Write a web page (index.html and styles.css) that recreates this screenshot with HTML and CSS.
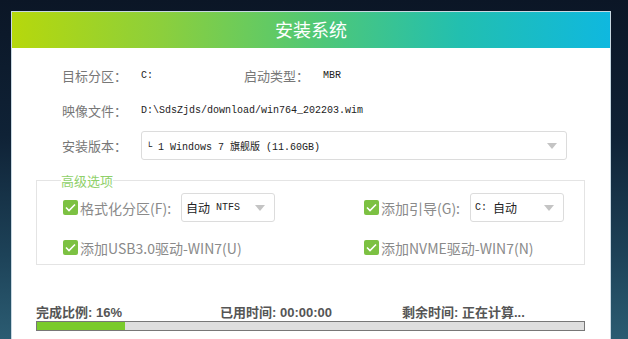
FILE: index.html
```html
<!doctype html>
<html>
<head>
<meta charset="utf-8">
<title>安装系统</title>
<link rel="stylesheet" href="styles.css">
</head>
<body>
<div class="dialog">
  <div class="title">安装系统</div>
  <div class="info">
    <div class="row">
      <span class="label">目标分区：</span>
      <span class="value short">C:</span>
      <span class="label">启动类型：</span>
      <span class="value">MBR</span>
    </div>
    <div class="row">
      <span class="label">映像文件：</span>
      <span class="value">D:\SdsZjds/download/win764_202203.wim</span>
    </div>
    <div class="row">
      <span class="label">安装版本：</span>
      <div class="select wide">
        <span class="value">└ 1 Windows 7 旗舰版 (11.60GB)</span>
        <i class="arrow"></i>
      </div>
    </div>
  </div>
  <fieldset class="adv">
    <legend>高级选项</legend>
    <div class="opts">
      <div class="opt">
        <b class="check"><svg width="11" height="9" viewBox="0 0 11 9"><path d="M1 4.5 L4 7.5 L10 1.5" fill="none" stroke="#fff" stroke-width="1.6"/></svg></b>
        <span>格式化分区(F):</span>
        <div class="select small">
          <span class="cn">自动</span><span class="value">&nbsp;NTFS</span>
          <i class="arrow"></i>
        </div>
      </div>
      <div class="opt">
        <b class="check"><svg width="11" height="9" viewBox="0 0 11 9"><path d="M1 4.5 L4 7.5 L10 1.5" fill="none" stroke="#fff" stroke-width="1.6"/></svg></b>
        <span>添加引导(G):</span>
        <div class="select small">
          <span class="value">C:&nbsp;</span><span class="cn">自动</span>
          <i class="arrow"></i>
        </div>
      </div>
      <div class="opt">
        <b class="check"><svg width="11" height="9" viewBox="0 0 11 9"><path d="M1 4.5 L4 7.5 L10 1.5" fill="none" stroke="#fff" stroke-width="1.6"/></svg></b>
        <span>添加USB3.0驱动-WIN7(U)</span>
      </div>
      <div class="opt">
        <b class="check"><svg width="11" height="9" viewBox="0 0 11 9"><path d="M1 4.5 L4 7.5 L10 1.5" fill="none" stroke="#fff" stroke-width="1.6"/></svg></b>
        <span>添加NVME驱动-WIN7(N)</span>
      </div>
    </div>
  </fieldset>
  <div class="progress">
    <div class="stats">
      <span class="s1">完成比例: 16%</span>
      <span class="s2">已用时间: 00:00:00</span>
      <span>剩余时间: 正在计算...</span>
    </div>
    <div class="bar"><div class="fill" style="width:16%"></div></div>
  </div>
</div>
</body>
</html>
```
FILE: styles.css
```css
html, body {
	margin: 0;
	height: 100%;
}
body {
	background: linear-gradient(to bottom, #0b1626 0%, #0f2236 40%, #1d4258 75%, #2b5c72 100%);
	padding: 11px 0 0 11px;
	box-sizing: border-box;
	overflow: hidden;
	font-family: "Noto Sans CJK SC", sans-serif;
}
.dialog {
	width: 598px;
	height: 360px;
	background: #fff;
	border: 1px solid #c8d8e2;
}
.title {
	height: 36px;
	line-height: 35px;
	text-align: center;
	color: #fff;
	font-size: 18px;
	background: linear-gradient(to right, #b6d80c 0%, #8ccf3c 25%, #52c873 50%, #22bfb0 75%, #0fb8df 100%);
}
.info {
	padding: 13px 0 0 50px;
	display: flex;
	flex-direction: column;
	gap: 7px;
}
.row {
	display: flex;
	align-items: center;
	height: 28px;
}
.row:last-child {
	height: 29px;
}
.label {
	width: 79px;
	font-size: 13px;
	color: #777;
}
.value {
	font-family: "Liberation Mono", "Noto Sans CJK SC", monospace;
	font-size: 10px;
	color: #222;
	white-space: pre;
}
.short {
	width: 103px;
}
.select {
	position: relative;
	display: flex;
	align-items: center;
	box-sizing: border-box;
	height: 29px;
	border: 1px solid #dcdcdc;
	border-radius: 3px;
	padding-left: 4px;
}
.wide {
	width: 426px;
}
.small {
	width: 94px;
	margin-left: 10px;
}
.cn {
	font-size: 12px;
	color: #222;
}
.arrow {
	position: absolute;
	right: 9px;
	top: 11px;
	border-left: 5px solid transparent;
	border-right: 5px solid transparent;
	border-top: 6px solid #c4c4c4;
}
.adv {
	margin: 11px 0 0 24px;
	width: 549px;
	box-sizing: border-box;
	border: 1px solid #e4e4e4;
	padding: 3px 0 2px 26px;
}
.adv legend {
	font-size: 13px;
	color: #8fd06a;
	padding: 0;
	margin-left: -2px;
}
.opts {
	display: grid;
	grid-template-columns: 301px 1fr;
	row-gap: 11px;
}
.opt {
	display: flex;
	align-items: center;
	height: 29px;
	font-size: 14px;
	color: #8a8a8a;
}
.check {
	display: flex;
	align-items: center;
	justify-content: center;
	width: 15px;
	height: 15px;
	margin-right: 2px;
	border-radius: 2px;
	background: #7cc142;
}
.progress {
	margin: 40px 0 0 24px;
	width: 549px;
}
.stats {
	display: flex;
	font-family: "Liberation Sans", "Noto Sans CJK SC", sans-serif;
	font-weight: bold;
	font-size: 13px;
	color: #555;
	height: 16px;
	line-height: 16px;
}
.s1 {
	width: 184px;
}
.s2 {
	width: 182px;
}
.bar {
	height: 10px;
	box-sizing: border-box;
	border: 1px solid #777;
	background: #dedede;
}
.fill {
	height: 100%;
	background: #7acb2c;
}
```
